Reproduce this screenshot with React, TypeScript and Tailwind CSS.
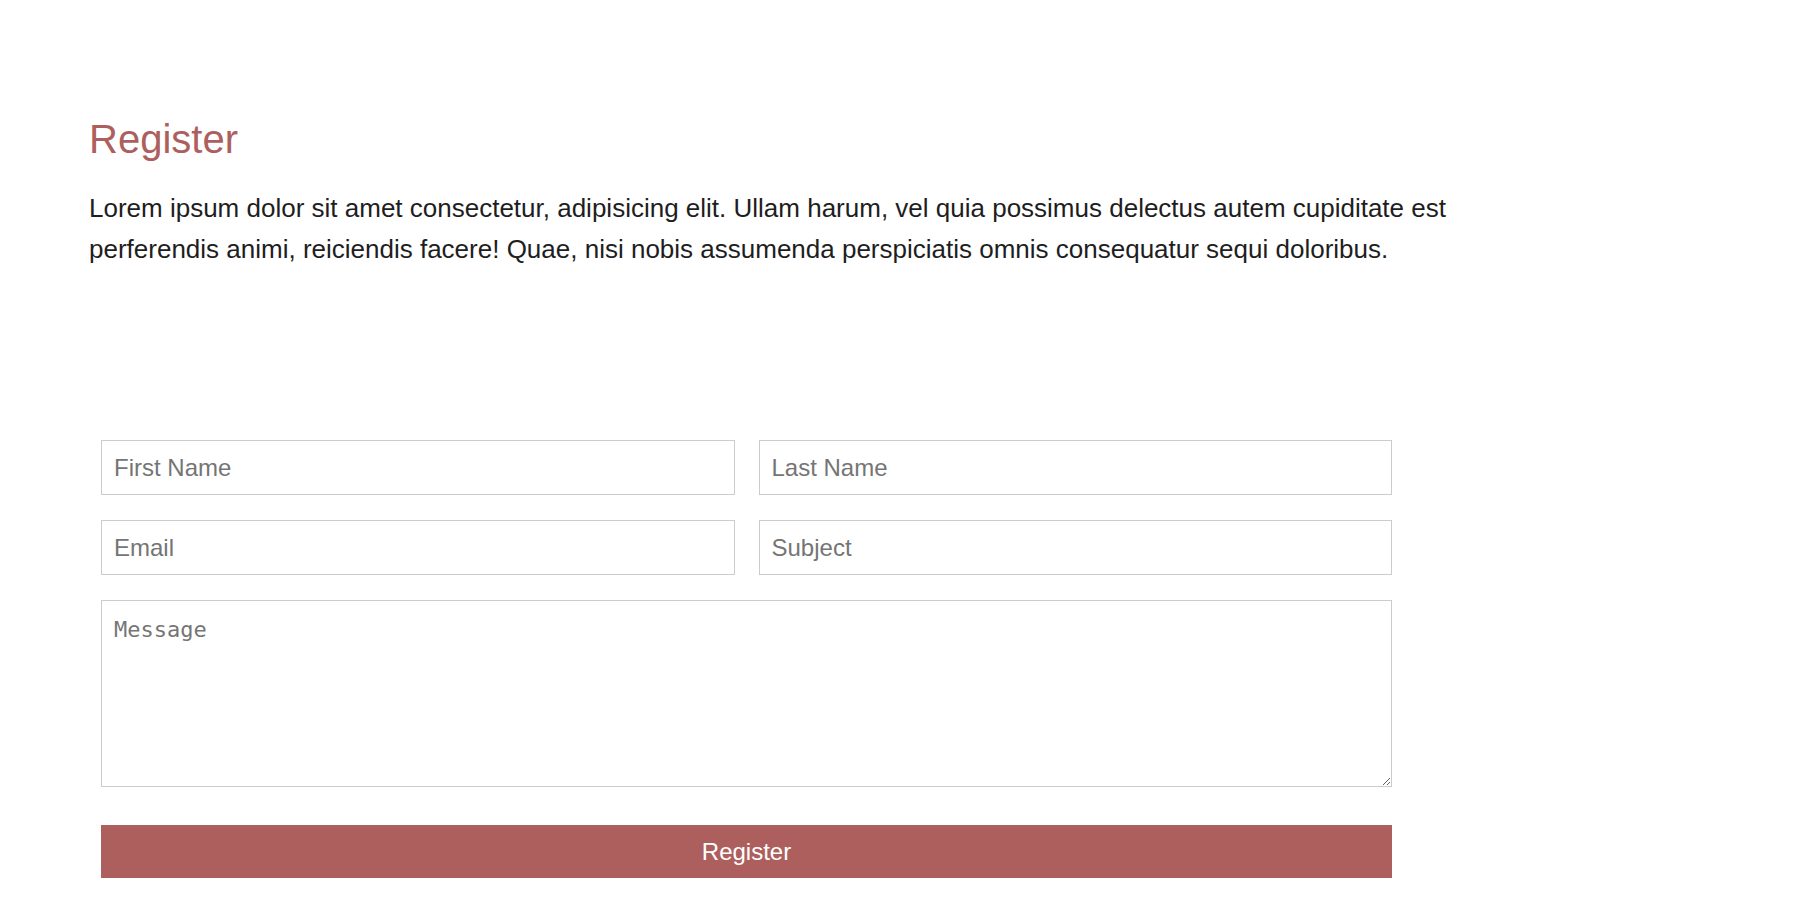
import React from "react";

const fieldClass =
  "h-[55px] w-full border border-[#cccccc] bg-white px-[12px] text-[24px] text-[#222] placeholder:text-[#757575] outline-none";

const App: React.FC = () => {
  return (
    <div className="min-h-screen bg-white font-['Liberation_Sans',Arial,sans-serif]">
      <section className="pl-[89px] pt-[116px] pb-[33px]">
        {/* Heading */}
        <h1 className="text-[40px] leading-[46px] text-[#ad5f5e]">Register</h1>
        <p className="mt-[26px] max-w-[1420px] text-[26px] leading-[41px] text-[#1e1e1e]">
          Lorem ipsum dolor sit amet consectetur, adipisicing elit. Ullam harum,
          vel quia possimus delectus autem cupiditate est perferendis animi,
          reiciendis facere! Quae, nisi nobis assumenda perspiciatis omnis
          consequatur sequi doloribus.
        </p>

        {/* Form */}
        <form
          className="ml-[12px] mt-[170px] flex w-[1291px] flex-col"
          onSubmit={(e) => e.preventDefault()}
        >
          <div className="grid grid-cols-2 gap-x-[24px] gap-y-[25px]">
            <input type="text" placeholder="First Name" className={fieldClass} />
            <input type="text" placeholder="Last Name" className={fieldClass} />
            <input type="email" placeholder="Email" className={fieldClass} />
            <input type="text" placeholder="Subject" className={fieldClass} />
            <textarea
              placeholder="Message"
              className="col-span-2 h-[187px] w-full resize-y border border-[#cccccc] bg-white px-[12px] pt-[12px] font-['DejaVu_Sans_Mono',monospace] text-[22px] text-[#222] placeholder:text-[#757575] outline-none"
            />
          </div>
          <button
            type="submit"
            className="mt-[38px] h-[53px] w-full bg-[#ad5f5e] text-[24px] text-white"
          >
            Register
          </button>
        </form>
      </section>
    </div>
  );
};

export default App;
